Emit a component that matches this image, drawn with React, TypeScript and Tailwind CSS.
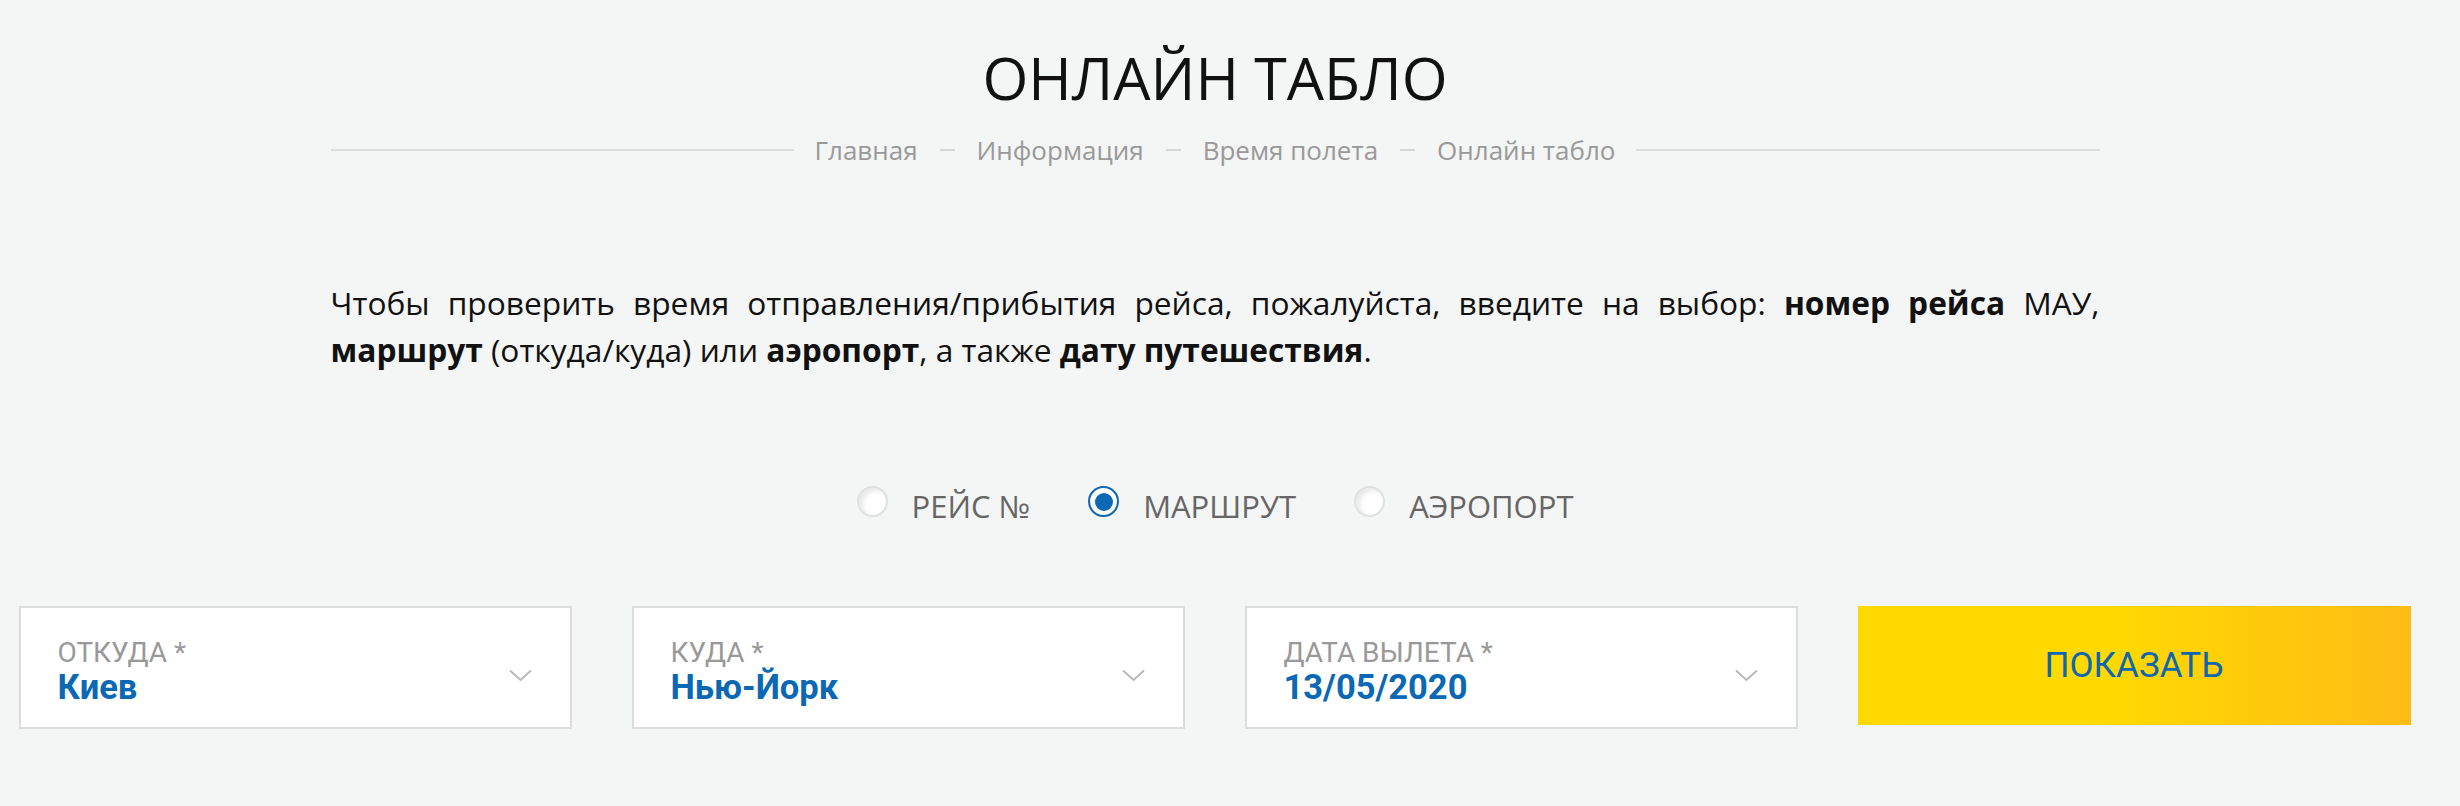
import { useState } from "react";

const fields = [
  { label: "ОТКУДА *", value: "Киев" },
  { label: "КУДА *", value: "Нью-Йорк" },
  { label: "ДАТА ВЫЛЕТА *", value: "13/05/2020" },
];

const modes = ["РЕЙС №", "МАРШРУТ", "АЭРОПОРТ"];

const crumbs = ["Главная", "Информация", "Время полета", "Онлайн табло"];

function Chevron() {
  return (
    <svg width="23" height="13" viewBox="0 0 23 13" className="shrink-0 mt-[10px]">
      <polyline points="1,1.5 11.5,11 22,1.5" fill="none" stroke="#b8b8b8" strokeWidth="2" />
    </svg>
  );
}

function Radio({ checked }: { checked: boolean }) {
  if (checked) {
    return (
      <span className="mt-[2px] w-[31px] h-[31px] rounded-full border-2 border-[#0a68b4] bg-white flex items-center justify-center shrink-0">
        <span className="w-[18px] h-[18px] rounded-full bg-[#0a68b4]" />
      </span>
    );
  }
  return (
    <span className="mt-[2px] w-[31px] h-[31px] rounded-full border-2 border-[#e0e0e0] bg-white shadow-[inset_4px_3px_4px_rgba(0,0,0,0.09)] shrink-0" />
  );
}

export default function App() {
  const [mode, setMode] = useState(1);

  return (
    <div className="min-h-screen bg-[#f4f5f5] font-['Open_Sans',sans-serif]">
      <div className="w-[2430px] flex flex-col items-center pt-[37px] pb-[80px]">
        <h1 className="text-[59px] leading-[80px] font-normal text-[#111]">ОНЛАЙН ТАБЛО</h1>

        <div className="mt-[15px] w-[1769px] flex items-center gap-[20px]">
          <div className="flex-1 h-[2px] bg-[#dcdcdc]" />
          <div className="flex items-center gap-[22px] text-[26px] leading-[36px] text-[#999]">
            {crumbs.map((c, i) => (
              <div key={c} className="flex items-center gap-[22px]">
                {i > 0 && <span className="w-[15px] h-[2px] bg-[#d6d6d6]" />}
                <span>{c}</span>
              </div>
            ))}
          </div>
          <div className="flex-1 h-[2px] bg-[#dcdcdc]" />
        </div>

        <div className="mt-[111px] w-[1769px] text-[31.7px] leading-[47px] text-[#111]">
          <p className="text-justify [text-align-last:justify]">
            Чтобы проверить время отправления/прибытия рейса, пожалуйста, введите на выбор:{" "}
            <b>номер рейса</b> МАУ,
          </p>
          <p>
            <b>маршрут</b> (откуда/куда) или <b>аэропорт</b>, а также <b>дату путешествия</b>.
          </p>
        </div>

        <div className="mt-[111px] flex items-start gap-[58px]">
          {modes.map((m, i) => (
            <button
              key={m}
              onClick={() => setMode(i)}
              className="flex items-start gap-[24px] text-[31px] leading-[44px] text-[#666]"
            >
              <Radio checked={mode === i} />
              <span>{m}</span>
            </button>
          ))}
        </div>

        <div className="mt-[78px] w-[2393px] flex items-start gap-[60px] font-['Roboto',sans-serif]">
          {fields.map((f) => (
            <div
              key={f.label}
              className="w-[553px] h-[123px] bg-white border-2 border-[#dcdcdc] flex items-center pl-[37px] pr-[38px] pt-[6px]"
            >
              <div className="flex-1 flex flex-col">
                <span className="text-[28px] leading-[32px] text-[#999]">{f.label}</span>
                <span className="text-[34.5px] leading-[36px] font-bold text-[#0a68b4]">{f.value}</span>
              </div>
              <Chevron />
            </div>
          ))}
          <button className="w-[553px] h-[119px] bg-[linear-gradient(90deg,#ffd900_0%,#ffd900_45%,#fdbc15_100%)] text-[35px] leading-[40px] text-[#0d67b0] flex items-center justify-center">
            ПОКАЗАТЬ
          </button>
        </div>
      </div>
    </div>
  );
}
